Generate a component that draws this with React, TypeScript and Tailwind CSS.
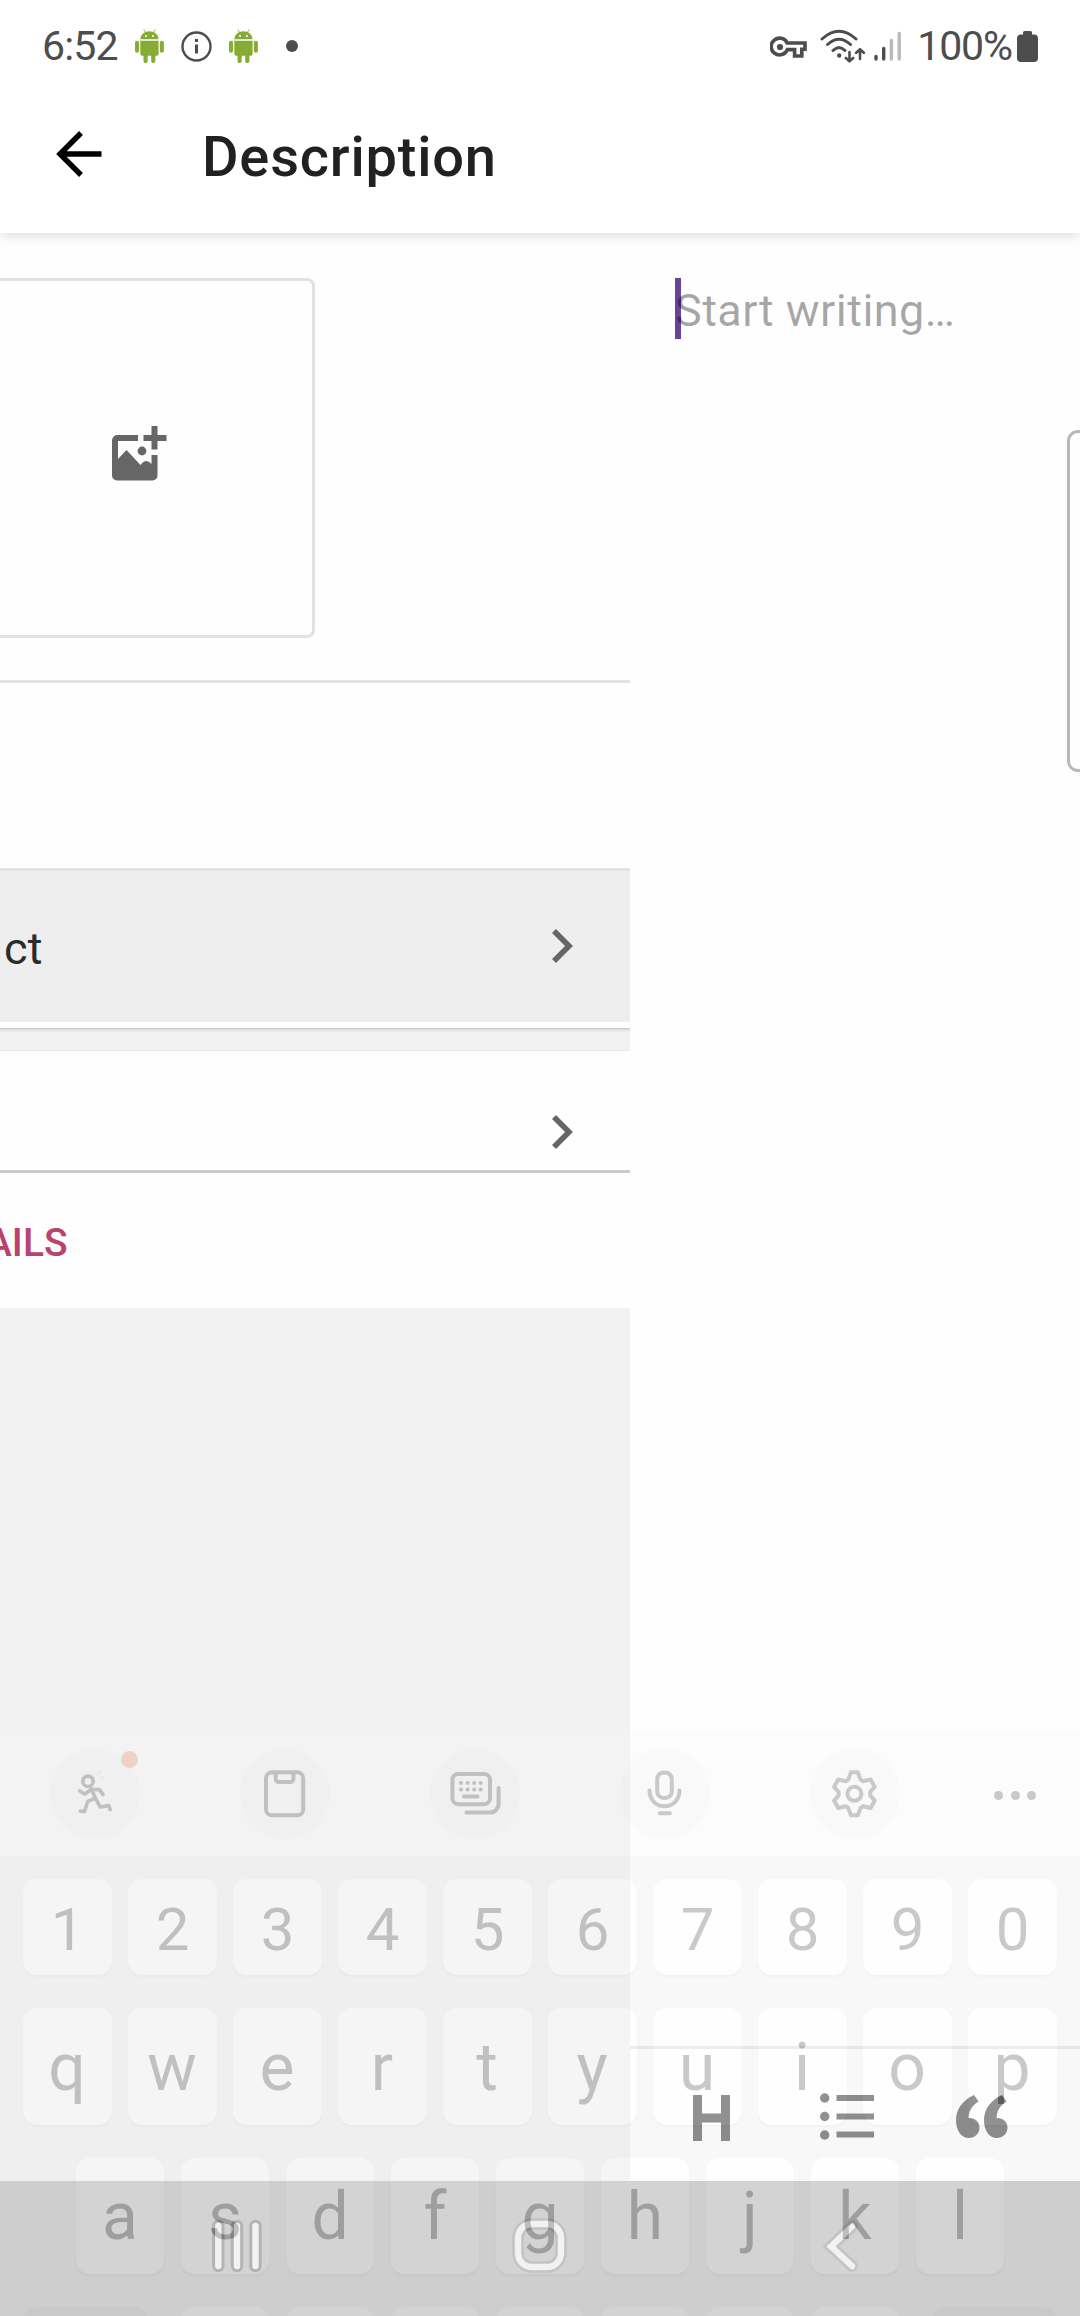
import React from "react";

function AndroidBot() {
  return (
    <svg className="h-[34px] w-[29px]" viewBox="0 0 29 34" fill="#87ac36">
      <path d="M5.300 10.300C5.500 7 7.200 4.600 10 3.200L8.300 0.600L8.900 0.200L10.800 2.900Q14.500 1.500 18.100 2.900L20 0.200L20.600 0.600L18.900 3.200C21.700 4.600 23.400 7 23.600 10.300Z" />
      <path d="M5.300 11.700H23.600V25a1.800 1.800 0 0 1-1.800 1.800H20.400V32a2.100 2.100 0 0 1-4.200 0V26.800H12.700V32a2.100 2.100 0 0 1-4.200 0V26.800H7.100A1.800 1.800 0 0 1 5.300 25Z" />
      <rect x="0" y="11.700" width="4.100" height="12" rx="2" />
      <rect x="24.800" y="11.700" width="4.100" height="12" rx="2" />
      <circle cx="11" cy="7" r="1" fill="#fff" />
      <circle cx="17.900" cy="7" r="1" fill="#fff" />
    </svg>
  );
}

function StatusBar() {
  return (
    <div className="flex h-[92px] shrink-0 items-center pr-[42px] pl-[42px] text-[41px] leading-none text-[#4d4d4d]">
      <span className="mt-[1px] w-[93px] tracking-[-0.8px]">6:52</span>
      <AndroidBot />
      <svg className="ml-[17px] size-[31px]" viewBox="0 0 31 31" fill="none" stroke="#4d4d4d">
        <circle cx="15.5" cy="15.5" r="14" strokeWidth="2.4" />
        <path d="M15.5 13.5V22.5M15.5 8V11" strokeWidth="3" />
      </svg>
      <div className="ml-[17px] flex">
        <AndroidBot />
      </div>
      <div className="ml-[28px] size-[12px] rounded-full bg-[#4d4d4d]" />
      <div className="flex-1" />
      <svg className="mt-[2px] mr-[13px] h-[22px] w-[37px]" viewBox="0 0 37 22" fill="none" stroke="#4d4d4d" strokeWidth="4">
        <path d="M17.2 7H35v6.2h-3.2V20h-7.2v-6.4h-7.2A8.4 8.4 0 1 1 17.2 7Z" strokeWidth="3.6" />
        <circle cx="10" cy="11" r="3.1" fill="#4d4d4d" stroke="none" />
      </svg>
      <svg className="h-[34px] w-[46px]" viewBox="0 0 46 34" fill="none" stroke="#4d4d4d" strokeWidth="3" strokeLinecap="round" strokeLinejoin="round">
        <path d="M2 10Q19 -5.5 36 10M7.5 15.5Q19 5 30.500 15.500M13 21.500Q19 15.500 25 21.500" />
        <circle cx="19.200" cy="26.500" r="2.200" fill="#4d4d4d" stroke="none" />
        <path d="M29.500 23V32M25.800 29L29.500 32.300L33.200 29M40 30V21M36.200 23.800L40 20.300L43.800 23.800" strokeWidth="2.600" />
      </svg>
      <svg className="ml-[8px] h-[32px] w-[28px]" viewBox="0 0 28 32" fill="none" strokeWidth="3.400" strokeLinecap="round">
        <path d="M2 26.500V29M9.700 18.500V29" stroke="#4d4d4d" />
        <path d="M17.400 10.500V29M25.200 3.500V29" stroke="#bababa" />
      </svg>
      <span className="mt-[1px] ml-[15px] tracking-[-1.1px]">100%</span>
      <svg className="ml-[5px] h-[33px] w-[21px]" viewBox="0 0 21 33" fill="#4d4d4d">
        <path d="M6 2.500A1.500 1.500 0 0 1 7.500 1H13.500A1.500 1.500 0 0 1 15 2.500V4.500H17A4 4 0 0 1 21 8.500V28A4 4 0 0 1 17 32H4A4 4 0 0 1 0 28V8.500A4 4 0 0 1 4 4.500H6Z" />
      </svg>
    </div>
  );
}

function Header() {
  return (
    <div className="flex h-[141px] shrink-0 items-center pl-[56px]">
      <svg className="mb-[17px] h-[46px] w-[46px]" viewBox="0 0 46 46" fill="none" stroke="#000" strokeWidth="5.400">
        <path d="M45.500 23H5M25 2L4 23L25 44" />
      </svg>
      <h1 className="mb-[11px] ml-[100px] text-[56px] leading-none font-medium tracking-[0.8px] text-[#212121]">Description</h1>
    </div>
  );
}

function Chevron() {
  return (
    <svg className="h-[34px] w-[21px]" viewBox="0 0 21 34" fill="none" stroke="#666" strokeWidth="5.600">
      <path d="M2 2L17 17L2 32" />
    </svg>
  );
}

function ProductPane() {
  return (
    <div className="flex w-[630px] shrink-0 flex-col overflow-hidden bg-[#f2f2f2]">
      <div className="h-[447px] bg-[#fefefe] pt-[45px]">
        <div className="-ml-[12px] h-[360px] w-[327px] rounded-[8px] border-[3px] border-[#e2e2e2] pt-[144px] pl-[120px]">
          <svg className="size-[57px]" viewBox="0 0 57 57" fill="#666">
            <path d="M7 10H27V16H7V34L15.500 25L29.500 40Q35 32.500 40.500 39V30H46.500V50.500a5 5 0 0 1-5 5H6a5 5 0 0 1-5-5V15.500a5.500 5.500 0 0 1 6-5.500Z" />
            <circle cx="31" cy="26" r="4.400" />
            <path d="M40.500 1H46.500V10H55.500V16H46.500V24.500H40.500V16H32.500V10H40.500Z" />
          </svg>
        </div>
      </div>
      <div className="h-[188px] border-t-[3px] border-[#e2e2e2] bg-[#fefefe]" />
      <div className="flex h-[154px] items-center justify-between border-t-[3px] border-[#e2e2e2] bg-[#eee] pr-[57px] pb-[2px] pl-[4px]">
        <span className="mt-[6px] text-[45px] leading-none tracking-[0.3px] text-[#2b2b2b]">ct</span>
        <Chevron />
      </div>
      <div className="h-[6px] bg-white" />
      <div className="h-[23px] border-t border-b border-t-[#c8caca] border-b-[#e8e8e8] bg-[linear-gradient(#dfdfdf,#f2f2f2_4px)]" />
      <div className="flex h-[122px] justify-end border-b-[3px] border-[#cbcbcb] bg-[#fefefe] pt-[64px] pr-[57px]">
        <Chevron />
      </div>
      <div className="h-[135px] bg-[#fefefe] pt-[51px]">
        <span className="-ml-[14px] text-[39px] leading-none font-medium text-[#b9426e]">AILS</span>
      </div>
    </div>
  );
}

function EditorPane() {
  return (
    <div className="flex flex-1 flex-col bg-[#fefefe] pt-[45px]">
      <div className="relative h-[61px] pl-[45px]">
        <div className="absolute left-[45px] h-[61px] w-[6px] bg-[#674399]" />
        <span className="relative text-[45px] leading-[65px] tracking-[0.45px] whitespace-nowrap text-black/35">Start writing…</span>
      </div>
      <div className="mt-[91px] ml-[437px] h-[342px] w-[40px] self-start rounded-[11px] border-[3px] border-[#b8b8b8]" />
      <div className="flex-1" />
      <div className="flex h-[135px] items-start border-t-[3px] border-[#e7e7e7] pt-[43px] pl-[63px]">
        <svg className="mt-[3px] h-[46px] w-[37px]" viewBox="0 0 37 46" fill="#6c6c6c">
          <path d="M0 0H9V18.500H28V0H37V46H28V27.500H9V46H0Z" />
        </svg>
        <svg className="mt-[1px] ml-[90px] h-[47px] w-[54px]" viewBox="0 0 54 47" fill="#6c6c6c">
          <circle cx="4.700" cy="5" r="4.700" />
          <circle cx="4.700" cy="23.500" r="4.700" />
          <circle cx="4.700" cy="42" r="4.700" />
          <path d="M16.500 2H54V8H16.500ZM16.500 20.500H54V26.500H16.500ZM16.500 38.500H54V44.500H16.500Z" />
        </svg>
        <svg className="mt-[3px] ml-[82px] h-[43px] w-[52px]" viewBox="0 0 52 43" fill="#6c6c6c">
          <path d="M18 0L22.500 6.500C16 10.500 13 15.500 12.500 23C19 22.500 23.500 27 23.500 32.500C23.500 38.500 19 43 12.800 43C5.500 43 0 36 0 25C0 14 7 5 18 0Z" />
          <path transform="translate(28 0)" d="M18 0L22.500 6.500C16 10.500 13 15.500 12.500 23C19 22.500 23.500 27 23.500 32.500C23.500 38.500 19 43 12.800 43C5.500 43 0 36 0 25C0 14 7 5 18 0Z" />
        </svg>
      </div>
    </div>
  );
}

function NavBar() {
  return (
    <div className="flex h-[135px] shrink-0 bg-[#c5c5c5] pt-[37px] pl-[211px]">
      <svg className="h-[56px] w-[54px]" viewBox="0 0 54 56" strokeLinecap="round">
        <path d="M7.300 8V48M26 8V48M44.500 8V48" stroke="#9a9a9a" strokeWidth="12.400" />
        <path d="M7.300 8V48M26 8V48M44.500 8V48" stroke="#eee" strokeWidth="6.400" />
      </svg>
      <svg className="ml-[247px] size-[56px]" viewBox="0 0 56 56" fill="none">
        <rect x="6" y="6" width="43" height="43" rx="14" stroke="#afafaf" strokeWidth="11.500" />
        <rect x="6" y="6" width="43" height="43" rx="14" stroke="#eee" strokeWidth="6.400" />
      </svg>
      <svg className="ml-[255px] h-[56px] w-[40px]" viewBox="0 0 40 56" fill="none" strokeLinecap="round">
        <path d="M29 8.500L8 28.500L29 48" stroke="#afafaf" strokeWidth="11.500" />
        <path d="M29 8.500L8 28.500L29 48" stroke="#eee" strokeWidth="6.400" />
      </svg>
    </div>
  );
}

function ToolButton({ children }: { children: React.ReactNode }) {
  return (
    <div className="relative size-[90px] shrink-0 rounded-full bg-[#ebebeb]">
      <svg className="size-[90px]" viewBox="0 0 90 90" fill="none" stroke="#2f2f2f" strokeWidth="4" strokeLinecap="round" strokeLinejoin="round">
        {children}
      </svg>
    </div>
  );
}

function KeyboardToolbar() {
  return (
    <div className="flex h-[123px] items-center gap-[100px] bg-[#f8f8f8] pb-[1px] pl-[50px]">
      <div className="relative">
        <ToolButton>
          <g strokeWidth="3.600">
            <circle cx="38" cy="32.300" r="5.200" />
            <path d="M29.900 42L34.700 45L41.600 40.300L49.500 40.600L53 45.600M40.800 39L45.400 49L50.200 58L58.800 56.600L60.200 60.600M44.700 49.300L37.800 52.300L34.400 62.600L30.200 62" />
            <path d="M50.200 22.600L47.800 25M53.300 28L50.900 29.600" stroke="#d4d4d4" strokeWidth="2.600" />
          </g>
        </ToolButton>
        <div className="absolute top-[2px] left-[71px] size-[17px] rounded-full bg-[#e97539]" />
      </div>
      <ToolButton>
        <rect x="26" y="23.300" width="37.200" height="43" rx="6" />
        <path d="M35.700 24V29.500a3.500 3.500 0 0 0 3.500 3.500H50a3.500 3.500 0 0 0 3.500-3.500V24" />
      </ToolButton>
      <ToolButton>
        <rect x="22.400" y="25" width="37.600" height="30.200" rx="6" />
        <path d="M34 47.600H47.500M68.600 39V54.600a9 9 0 0 1-9 9H36.500" />
        <path d="M31 34h.01M37.600 34h.01M44.200 34h.01M50.700 34h.01M31 40.600h.01M37.600 40.600h.01M44.200 40.600h.01M50.700 40.600h.01" />
      </ToolButton>
      <ToolButton>
        <rect x="37.200" y="23.600" width="14.600" height="25.400" rx="6.500" />
        <path d="M29.500 41.600c0 9 6.500 15.700 15 15.700s15-6.700 15-15.700M39.800 64.300H49.800" />
      </ToolButton>
      <ToolButton>
        <path d="M41 23.300H47.800L50.600 30.600L53.200 32.200L60.600 30.400L64.700 38L60.200 42.800V46.400L64.700 51.600L60.600 59L53.200 57.200L50.600 59L47.800 66.300H41L38.200 59L35.600 57.200L28.200 59L24.100 51.600L28.600 46.400V42.800L24.100 38L28.200 30.400L35.600 32.200L38.200 30.600Z" />
        <circle cx="44.400" cy="44.800" r="7" />
      </ToolButton>
      <div className="mt-[2px] -ml-[6px] flex gap-[7.600px]">
        <div className="size-[9px] rounded-full bg-[#2f2f2f]" />
        <div className="size-[9px] rounded-full bg-[#2f2f2f]" />
        <div className="size-[9px] rounded-full bg-[#2f2f2f]" />
      </div>
    </div>
  );
}

const KEY = "flex justify-center rounded-[14px] bg-white shadow-[0_2px_2px_rgba(0,0,0,0.1)]";

function Keyboard() {
  return (
    <div className="absolute inset-x-0 top-[1733px] h-[583px] overflow-hidden text-[#2f2f2f] opacity-25">
      <KeyboardToolbar />
      <div className="h-[460px] bg-[#e9e9e9] pt-[23px]">
        <div className="flex gap-[16px] pl-[23px]">
          {"1234567890".split("").map((k) => (
            <div key={k} className={`${KEY} h-[96px] w-[89px] pt-[21px] text-[60px] leading-[60px]`}>{k}</div>
          ))}
        </div>
        <div className="mt-[33px] flex gap-[16px] pl-[23px]">
          {"qwertyuiop".split("").map((k) => (
            <div key={k} className={`${KEY} h-[117px] w-[89px] pt-[27px] pr-[1px] text-[66px] leading-[66px]`}>{k}</div>
          ))}
        </div>
        <div className="mt-[33px] flex gap-[17px] pl-[76px]">
          {"asdfghjkl".split("").map((k) => (
            <div key={k} className={`${KEY} h-[116px] w-[88px] pt-[26px] text-[66px] leading-[66px]`}>{k}</div>
          ))}
        </div>
        <div className="mt-[33px] flex gap-[33px] pl-[23px]">
          <div className="h-[116px] w-[125px] rounded-[14px] bg-[#d8d8d8]" />
          <div className="flex gap-[17px]">
            {[0, 1, 2, 3, 4, 5, 6].map((k) => (
              <div key={k} className="h-[116px] w-[88px] rounded-[14px] bg-white" />
            ))}
          </div>
          <div className="h-[116px] w-[125px] rounded-[14px] bg-[#d8d8d8]" />
        </div>
      </div>
    </div>
  );
}

export default function App() {
  return (
    <div className="relative flex h-[2316px] w-[1080px] flex-col overflow-hidden bg-white font-['Roboto',sans-serif]">
      <div className="relative z-10 bg-white shadow-[0_2px_12px_rgba(0,0,0,0.15)]">
        <StatusBar />
        <Header />
      </div>
      <div className="flex min-h-0 flex-1">
        <ProductPane />
        <EditorPane />
      </div>
      <NavBar />
      <Keyboard />
    </div>
  );
}
